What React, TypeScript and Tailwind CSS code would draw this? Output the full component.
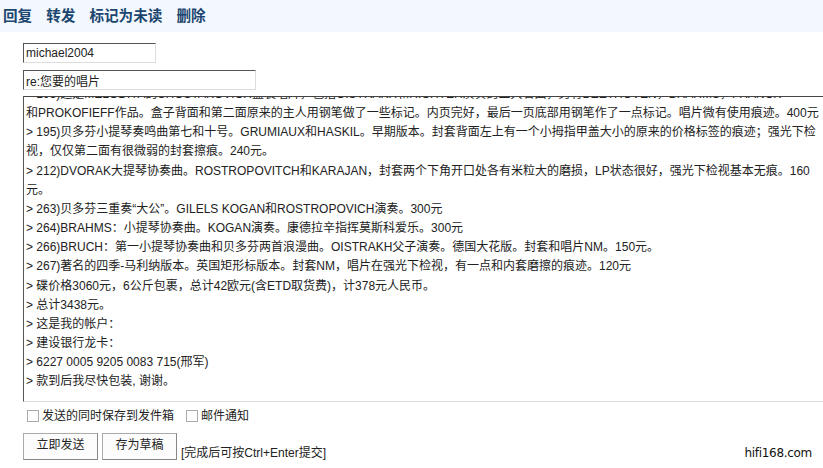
import React from "react"

const lines = [
  "> 193)这是MELODIYA的SHOSTAKOVICH盒装唱片，包括OISTRAKH和RICHTER演奏的三大名曲，另有BEETHOVEN，BRAHMS，FRANCK",
  "和PROKOFIEFF作品。盒子背面和第二面原来的主人用钢笔做了一些标记。内页完好，最后一页底部用钢笔作了一点标记。唱片微有使用痕迹。400元",
  "> 195)贝多芬小提琴奏鸣曲第七和十号。GRUMIAUX和HASKIL。早期版本。封套背面左上有一个小拇指甲盖大小的原来的价格标签的痕迹；强光下检",
  "视，仅仅第二面有很微弱的封套擦痕。240元。",
  "> 212)DVORAK大提琴协奏曲。ROSTROPOVITCH和KARAJAN，封套两个下角开口处各有米粒大的磨损，LP状态很好，强光下检视基本无痕。160",
  "元。",
  "> 263)贝多芬三重奏“大公”。GILELS KOGAN和ROSTROPOVICH演奏。300元",
  "> 264)BRAHMS：小提琴协奏曲。KOGAN演奏。康德拉辛指挥莫斯科爱乐。300元",
  "> 266)BRUCH：第一小提琴协奏曲和贝多芬两首浪漫曲。OISTRAKH父子演奏。德国大花版。封套和唱片NM。150元。",
  "> 267)著名的四季-马利纳版本。英国矩形标版本。封套NM，唱片在强光下检视，有一点和内套磨擦的痕迹。120元",
  "> 碟价格3060元，6公斤包裹，总计42欧元(含ETD取货费)，计378元人民币。",
  "> 总计3438元。",
  "> 这是我的帐户：",
  "> 建设银行龙卡：",
  "> 6227 0005 9205 0083 715(邢军)",
  "> 款到后我尽快包装, 谢谢。",
]

const actions = ["回复", "转发", "标记为未读", "删除"]

const font = "font-['Liberation_Sans','Noto_Sans_CJK_SC',sans-serif]"

export default function App() {
  return (
    <div className={`w-[823px] h-[468px] overflow-hidden bg-white text-[12px] text-[#222] ${font}`}>
      {/* Toolbar */}
      <div className="h-[32px] bg-[#f2f8fd] flex items-center pl-[3px] gap-[14px]">
        {actions.map((a) => (
          <a key={a} className="text-[14.6px] font-bold text-[#1c4670] leading-none cursor-pointer">
            {a}
          </a>
        ))}
      </div>

      <div className="pl-[23px] pt-[11px]">
        <input
          readOnly
          value="michael2004"
          className="block w-[133px] h-[20px] px-[2px] text-[12px] text-[#222] border border-t-[#555] border-l-[#555] border-b-[#ddd] border-r-[#ddd] outline-none"
        />
        <input
          readOnly
          value="re:您要的唱片"
          className="block mt-[7px] w-[233px] h-[20px] px-[2px] text-[12px] text-[#222] border border-t-[#555] border-l-[#555] border-b-[#ddd] border-r-[#ddd] outline-none"
        />

        {/* Message body, scrolled */}
        <div className="mt-[6px] w-[820px] h-[306px] overflow-hidden border border-t-[#444] border-l-[#555] border-b-[#ddd] border-r-0">
          <div className="-mt-[12px] pl-[2px] leading-[19.15px]">
            {lines.map((l, i) => (
              <div key={i} className="whitespace-nowrap">
                {l}
              </div>
            ))}
          </div>
        </div>

        {/* Options */}
        <div className="flex items-center mt-[6px] h-[16px] pl-[4px]">
          <span className="w-[12px] h-[12px] border border-[#aaa] bg-white mr-[3px]" />
          <span>发送的同时保存到发件箱</span>
          <span className="w-[12px] h-[12px] border border-[#aaa] bg-white ml-[12px] mr-[3px]" />
          <span>邮件通知</span>
        </div>

        {/* Buttons */}
        <div className="flex items-end mt-[9px]">
          <button className="w-[75px] h-[27px] pb-[3px] border border-[#aaa] border-b-[#888] border-r-[#888] bg-[#fcfcfc] text-[12px] text-[#222]">
            立即发送
          </button>
          <button className="ml-[4px] w-[75px] h-[27px] pb-[3px] border border-[#aaa] border-b-[#888] border-r-[#888] bg-[#fcfcfc] text-[12px] text-[#222]">
            存为草稿
          </button>
          <span className="ml-[4px] leading-none mb-[1px]">[完成后可按Ctrl+Enter提交]</span>
          <span className="ml-auto mr-[11px] mb-[1px] leading-none text-[12px] text-[#111] font-['DejaVu_Sans',sans-serif] tracking-[-0.3px]">
            hifi168.com
          </span>
        </div>
      </div>
    </div>
  )
}
